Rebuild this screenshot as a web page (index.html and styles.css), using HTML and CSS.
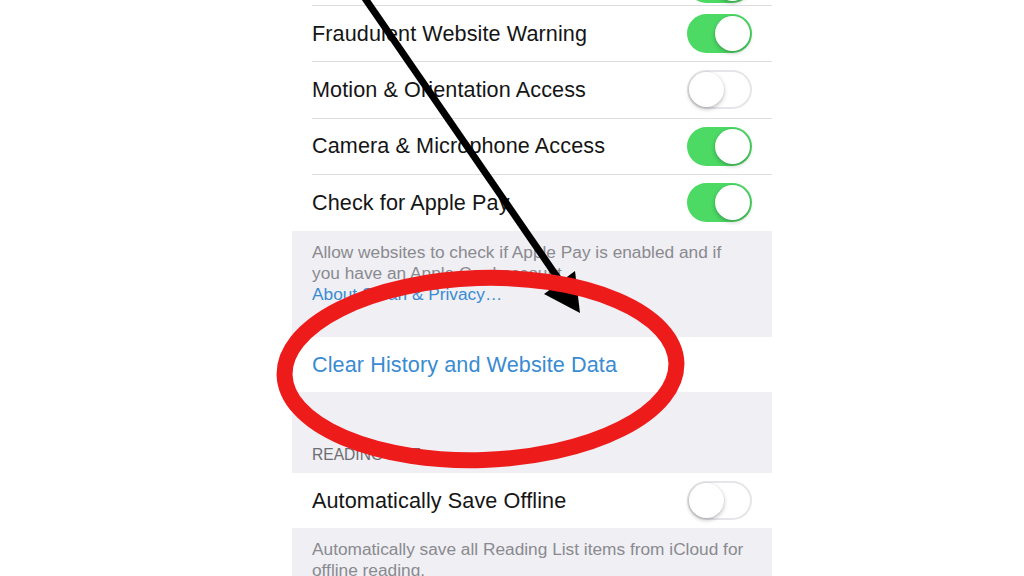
FILE: index.html
```html
<!DOCTYPE html>
<html>
<head>
<meta charset="utf-8">
<link rel="stylesheet" href="styles.css">
</head>
<body>
<div class="page">
  <div class="phone">
    <div class="group group-top">
      <div class="row row-hidden"><span class="label"></span><span class="toggle on"><span class="knob"></span></span></div>
      <div class="row"><span class="label">Fraudulent Website Warning</span><span class="toggle on"><span class="knob"></span></span></div>
      <div class="row"><span class="label">Motion &amp; Orientation Access</span><span class="toggle off"><span class="knob"></span></span></div>
      <div class="row"><span class="label">Camera &amp; Microphone Access</span><span class="toggle on"><span class="knob"></span></span></div>
      <div class="row"><span class="label">Check for Apple Pay</span><span class="toggle on"><span class="knob"></span></span></div>
    </div>
    <div class="footer footer-pay">
      <p class="note">Allow websites to check if Apple Pay is enabled and if you have an Apple Card account.</p>
      <p class="link">About Safari &amp; Privacy…</p>
    </div>
    <div class="group">
      <div class="row row-short"><span class="label action">Clear History and Website Data</span></div>
    </div>
    <div class="header">READING LIST</div>
    <div class="group">
      <div class="row row-short"><span class="label">Automatically Save Offline</span><span class="toggle off"><span class="knob"></span></span></div>
    </div>
    <div class="footer footer-reading">
      <p class="note">Automatically save all Reading List items from iCloud for offline reading.</p>
    </div>
  </div>
  <svg class="annot" width="1024" height="576" viewBox="0 0 1024 576">
    <line x1="362" y1="-6" x2="562" y2="284" stroke="#000" stroke-width="7" stroke-linecap="butt"/>
    <polygon points="580,313 544,294 575,271" fill="#000"/>
    <ellipse cx="480.5" cy="369" rx="196" ry="91" fill="none" stroke="#ee1b1b" stroke-width="16" transform="rotate(-1.8 480.5 369)"/>
  </svg>
</div>
</body>
</html>
```

FILE: styles.css
```css
html, body {
  margin: 0;
  padding: 0;
  background: #ffffff;
}

.page {
  position: relative;
  width: 1024px;
  height: 576px;
  overflow: hidden;
  font-family: "Liberation Sans", Arial, sans-serif;
}

.phone {
  width: 480px;
  margin-left: 292px;
  margin-top: -50.25px;
  background: #efeff4;
}

.group {
  background: #ffffff;
}

.row {
  box-sizing: border-box;
  height: 56.25px;
  margin-left: 20px;
  padding-right: 20px;
  display: flex;
  align-items: center;
  justify-content: space-between;
  border-bottom: 1px solid #dedee2;
}

.row:last-child {
  border-bottom: none;
}

.row-hidden {
  align-items: flex-end;
  padding-bottom: 2px;
}

.row-short {
  height: 55px;
}

.label {
  font-size: 21.6px;
  letter-spacing: 0.1px;
  color: #151515;
  white-space: nowrap;
}

.label.action {
  color: #3a8bd2;
}

.toggle {
  box-sizing: border-box;
  width: 65px;
  height: 39px;
  border-radius: 20px;
  padding: 2px;
  display: flex;
  flex-shrink: 0;
}

.toggle.on {
  background: #4cd964;
  justify-content: flex-end;
}

.toggle.off {
  background: #ffffff;
  box-shadow: inset 0 0 0 2px #e6e6ea;
  justify-content: flex-start;
}

.knob {
  width: 35px;
  height: 35px;
  border-radius: 50%;
  background: #ffffff;
  box-shadow: 0 2px 4px rgba(0, 0, 0, 0.25), 0 0 0 0.5px rgba(0, 0, 0, 0.06);
}

.footer {
  box-sizing: border-box;
  padding: 10.5px 24px 0 20px;
}

.footer-pay {
  height: 106px;
}

.footer-reading {
  height: 60px;
}

.note,
.link {
  margin: 0;
  font-size: 17.3px;
  line-height: 21px;
  color: #8a8a8f;
}

.link {
  color: #3a8bd2;
}

.header {
  box-sizing: border-box;
  height: 81px;
  padding: 0 20px 8px 20px;
  display: flex;
  align-items: flex-end;
  font-size: 15.6px;
  line-height: 20px;
  color: #6d6d72;
}

.annot {
  position: absolute;
  left: 0;
  top: 0;
  pointer-events: none;
}
```
